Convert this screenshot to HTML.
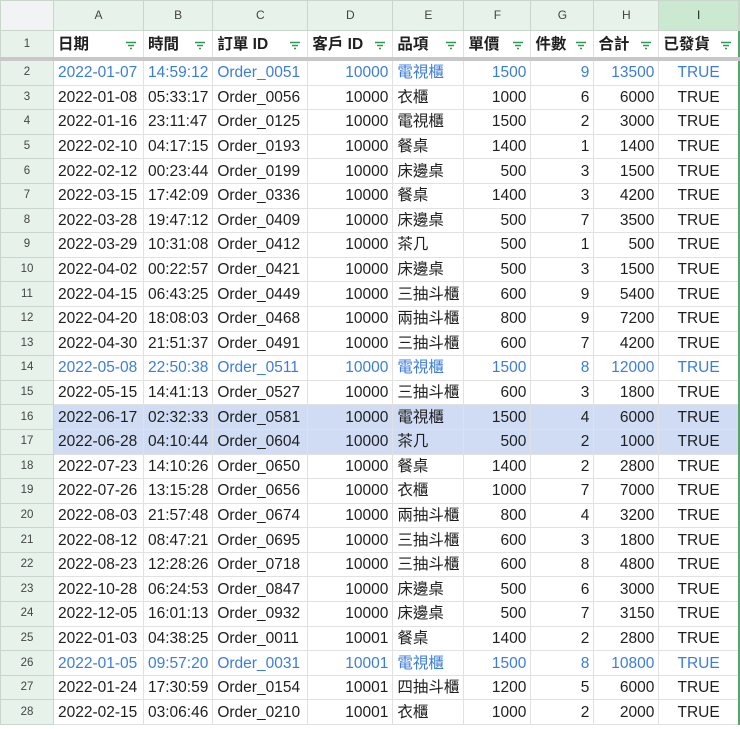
<!DOCTYPE html><html><head><meta charset="utf-8"><style>
body{margin:0;width:740px;height:729px;overflow:hidden;background:#fff;font-family:"Liberation Sans","Noto Sans CJK TC",sans-serif;}
table{border-collapse:collapse;table-layout:fixed;position:absolute;left:0;top:0;}
td{border:1px solid #e1e1e1;padding:0 4px;font-size:15.5px;color:#1f1f1f;white-space:nowrap;overflow:hidden;height:23.6px;line-height:23px}
tr.ch td{height:29px;background:#e7f3ea;color:#444;font-size:12px;text-align:center;border-color:#c9d6cc}
tr.ch td:first-child{background:#f1f3f4}
tr.ch td.sel{background:#cbe9d1;color:#222}
td.rh{background:#e7f3ea;color:#444;font-size:11.5px;text-align:center;border-color:#c9d6cc;padding:0}
tr.h td{height:26px;font-weight:bold;font-size:15.5px;border-bottom:4px solid #c8c8c8}
tr.h td.rh{font-weight:normal;font-size:11.5px}
.f{float:right;margin-top:8px;margin-right:2px}
.r{text-align:right}.c{text-align:center}
tr.b td:not(.rh){color:#3b7ddd}
tr.s td:not(.rh){background:#cfdcf4}
td.last{border-right:2px solid #5aa469}
</style></head><body>
<svg width="0" height="0" style="position:absolute"><symbol id="fi" viewBox="0 0 12 9"><path d="M1 1.5h10M3 4.5h6M5 7.5h2" stroke="#2e9a4e" stroke-width="1.4" fill="none"/></symbol></svg>
<table>
<colgroup><col style="width:53px"><col style="width:90px"><col style="width:69px"><col style="width:95px"><col style="width:85px"><col style="width:70px"><col style="width:67px"><col style="width:63px"><col style="width:65px"><col style="width:80px"></colgroup>
<tr class="ch"><td></td><td>A</td><td>B</td><td>C</td><td>D</td><td>E</td><td>F</td><td>G</td><td>H</td><td class="sel last">I</td></tr>
<tr class="h"><td class="rh">1</td><td>日期<svg class="f" width="12" height="9"><use href="#fi"/></svg></td><td>時間<svg class="f" width="12" height="9"><use href="#fi"/></svg></td><td>訂單 ID<svg class="f" width="12" height="9"><use href="#fi"/></svg></td><td>客戶 ID<svg class="f" width="12" height="9"><use href="#fi"/></svg></td><td>品項<svg class="f" width="12" height="9"><use href="#fi"/></svg></td><td>單價<svg class="f" width="12" height="9"><use href="#fi"/></svg></td><td>件數<svg class="f" width="12" height="9"><use href="#fi"/></svg></td><td>合計<svg class="f" width="12" height="9"><use href="#fi"/></svg></td><td class="last">已發貨<svg class="f" width="12" height="9"><use href="#fi"/></svg></td></tr>
<tr class="b"><td class="rh">2</td><td>2022-01-07</td><td>14:59:12</td><td>Order_0051</td><td class="r">10000</td><td>電視櫃</td><td class="r">1500</td><td class="r">9</td><td class="r">13500</td><td class="c last">TRUE</td></tr>
<tr><td class="rh">3</td><td>2022-01-08</td><td>05:33:17</td><td>Order_0056</td><td class="r">10000</td><td>衣櫃</td><td class="r">1000</td><td class="r">6</td><td class="r">6000</td><td class="c last">TRUE</td></tr>
<tr><td class="rh">4</td><td>2022-01-16</td><td>23:11:47</td><td>Order_0125</td><td class="r">10000</td><td>電視櫃</td><td class="r">1500</td><td class="r">2</td><td class="r">3000</td><td class="c last">TRUE</td></tr>
<tr><td class="rh">5</td><td>2022-02-10</td><td>04:17:15</td><td>Order_0193</td><td class="r">10000</td><td>餐桌</td><td class="r">1400</td><td class="r">1</td><td class="r">1400</td><td class="c last">TRUE</td></tr>
<tr><td class="rh">6</td><td>2022-02-12</td><td>00:23:44</td><td>Order_0199</td><td class="r">10000</td><td>床邊桌</td><td class="r">500</td><td class="r">3</td><td class="r">1500</td><td class="c last">TRUE</td></tr>
<tr><td class="rh">7</td><td>2022-03-15</td><td>17:42:09</td><td>Order_0336</td><td class="r">10000</td><td>餐桌</td><td class="r">1400</td><td class="r">3</td><td class="r">4200</td><td class="c last">TRUE</td></tr>
<tr><td class="rh">8</td><td>2022-03-28</td><td>19:47:12</td><td>Order_0409</td><td class="r">10000</td><td>床邊桌</td><td class="r">500</td><td class="r">7</td><td class="r">3500</td><td class="c last">TRUE</td></tr>
<tr><td class="rh">9</td><td>2022-03-29</td><td>10:31:08</td><td>Order_0412</td><td class="r">10000</td><td>茶几</td><td class="r">500</td><td class="r">1</td><td class="r">500</td><td class="c last">TRUE</td></tr>
<tr><td class="rh">10</td><td>2022-04-02</td><td>00:22:57</td><td>Order_0421</td><td class="r">10000</td><td>床邊桌</td><td class="r">500</td><td class="r">3</td><td class="r">1500</td><td class="c last">TRUE</td></tr>
<tr><td class="rh">11</td><td>2022-04-15</td><td>06:43:25</td><td>Order_0449</td><td class="r">10000</td><td>三抽斗櫃</td><td class="r">600</td><td class="r">9</td><td class="r">5400</td><td class="c last">TRUE</td></tr>
<tr><td class="rh">12</td><td>2022-04-20</td><td>18:08:03</td><td>Order_0468</td><td class="r">10000</td><td>兩抽斗櫃</td><td class="r">800</td><td class="r">9</td><td class="r">7200</td><td class="c last">TRUE</td></tr>
<tr><td class="rh">13</td><td>2022-04-30</td><td>21:51:37</td><td>Order_0491</td><td class="r">10000</td><td>三抽斗櫃</td><td class="r">600</td><td class="r">7</td><td class="r">4200</td><td class="c last">TRUE</td></tr>
<tr class="b"><td class="rh">14</td><td>2022-05-08</td><td>22:50:38</td><td>Order_0511</td><td class="r">10000</td><td>電視櫃</td><td class="r">1500</td><td class="r">8</td><td class="r">12000</td><td class="c last">TRUE</td></tr>
<tr><td class="rh">15</td><td>2022-05-15</td><td>14:41:13</td><td>Order_0527</td><td class="r">10000</td><td>三抽斗櫃</td><td class="r">600</td><td class="r">3</td><td class="r">1800</td><td class="c last">TRUE</td></tr>
<tr class="s"><td class="rh">16</td><td>2022-06-17</td><td>02:32:33</td><td>Order_0581</td><td class="r">10000</td><td>電視櫃</td><td class="r">1500</td><td class="r">4</td><td class="r">6000</td><td class="c last">TRUE</td></tr>
<tr class="s"><td class="rh">17</td><td>2022-06-28</td><td>04:10:44</td><td>Order_0604</td><td class="r">10000</td><td>茶几</td><td class="r">500</td><td class="r">2</td><td class="r">1000</td><td class="c last">TRUE</td></tr>
<tr><td class="rh">18</td><td>2022-07-23</td><td>14:10:26</td><td>Order_0650</td><td class="r">10000</td><td>餐桌</td><td class="r">1400</td><td class="r">2</td><td class="r">2800</td><td class="c last">TRUE</td></tr>
<tr><td class="rh">19</td><td>2022-07-26</td><td>13:15:28</td><td>Order_0656</td><td class="r">10000</td><td>衣櫃</td><td class="r">1000</td><td class="r">7</td><td class="r">7000</td><td class="c last">TRUE</td></tr>
<tr><td class="rh">20</td><td>2022-08-03</td><td>21:57:48</td><td>Order_0674</td><td class="r">10000</td><td>兩抽斗櫃</td><td class="r">800</td><td class="r">4</td><td class="r">3200</td><td class="c last">TRUE</td></tr>
<tr><td class="rh">21</td><td>2022-08-12</td><td>08:47:21</td><td>Order_0695</td><td class="r">10000</td><td>三抽斗櫃</td><td class="r">600</td><td class="r">3</td><td class="r">1800</td><td class="c last">TRUE</td></tr>
<tr><td class="rh">22</td><td>2022-08-23</td><td>12:28:26</td><td>Order_0718</td><td class="r">10000</td><td>三抽斗櫃</td><td class="r">600</td><td class="r">8</td><td class="r">4800</td><td class="c last">TRUE</td></tr>
<tr><td class="rh">23</td><td>2022-10-28</td><td>06:24:53</td><td>Order_0847</td><td class="r">10000</td><td>床邊桌</td><td class="r">500</td><td class="r">6</td><td class="r">3000</td><td class="c last">TRUE</td></tr>
<tr><td class="rh">24</td><td>2022-12-05</td><td>16:01:13</td><td>Order_0932</td><td class="r">10000</td><td>床邊桌</td><td class="r">500</td><td class="r">7</td><td class="r">3150</td><td class="c last">TRUE</td></tr>
<tr><td class="rh">25</td><td>2022-01-03</td><td>04:38:25</td><td>Order_0011</td><td class="r">10001</td><td>餐桌</td><td class="r">1400</td><td class="r">2</td><td class="r">2800</td><td class="c last">TRUE</td></tr>
<tr class="b"><td class="rh">26</td><td>2022-01-05</td><td>09:57:20</td><td>Order_0031</td><td class="r">10001</td><td>電視櫃</td><td class="r">1500</td><td class="r">8</td><td class="r">10800</td><td class="c last">TRUE</td></tr>
<tr><td class="rh">27</td><td>2022-01-24</td><td>17:30:59</td><td>Order_0154</td><td class="r">10001</td><td>四抽斗櫃</td><td class="r">1200</td><td class="r">5</td><td class="r">6000</td><td class="c last">TRUE</td></tr>
<tr><td class="rh">28</td><td>2022-02-15</td><td>03:06:46</td><td>Order_0210</td><td class="r">10001</td><td>衣櫃</td><td class="r">1000</td><td class="r">2</td><td class="r">2000</td><td class="c last">TRUE</td></tr>
</table>
</body></html>
